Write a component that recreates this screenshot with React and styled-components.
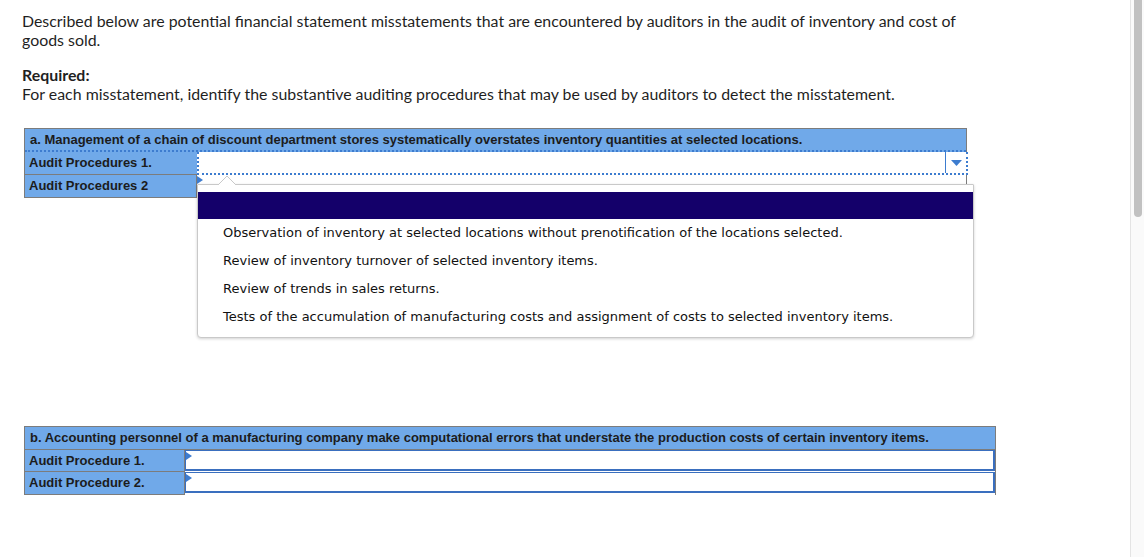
import React from "react";
import styled, { createGlobalStyle } from "styled-components";

const Global = createGlobalStyle`
  html, body { margin: 0; padding: 0; overflow: hidden; background: #fff; }
  #root { height: 557px; }
`;

const Page = styled.div`
  display: flex;
  height: 557px;
`;

const Main = styled.div`
  flex: 1;
  padding: 11px 0 0 22px;
  color: #1f1f1f;
`;

const ScrollTrack = styled.div`
  width: 12px;
  border-left: 1px solid #e4e4e4;
  background: #fafafa;
  display: flex;
  justify-content: center;
  padding-left: 1px;
`;

const ScrollThumb = styled.div`
  width: 8px;
  height: 217px;
  background: #c1c1c1;
  border-radius: 0 0 4px 4px;
`;

const Intro = styled.p`
  margin: 0;
  width: 975px;
  font-family: Lato, "Open Sans", sans-serif;
  font-size: 15.9px;
  line-height: 19px;
`;

const Required = styled.div`
  margin-top: 16px;
  font-family: Lato, "Open Sans", sans-serif;
  font-size: 15.9px;
  line-height: 19px;
  strong { font-weight: 700; }
`;

const Table = styled.div`
  position: relative;
  width: ${(p) => p.$width}px;
  margin: ${(p) => p.$mt}px 0 0 2px;
  border: 1px solid #7c7c7c;
  border-bottom: none;
  display: grid;
  grid-template-columns: ${(p) => p.$left}px 1fr;
  font-family: "Liberation Sans", Arial, sans-serif;
  font-size: 13px;
  font-weight: 700;
  color: #1c1c1c;
`;

const Header = styled.div`
  grid-column: 1 / -1;
  background: #70a9e9;
  line-height: 22px;
  padding-left: 5px;
  border-bottom: ${(p) => (p.$focus ? "2px dotted #3d7ccf" : "1px solid #7c7c7c")};
  height: ${(p) => (p.$focus ? 21 : 22)}px;
`;

const Label = styled.div`
  background: #70a9e9;
  height: ${(p) => p.$h || 22}px;
  line-height: ${(p) => p.$h || 22}px;
  padding-left: 4px;
  border-bottom: 1px solid #7c7c7c;
  border-right: ${(p) => (p.$noRight ? "none" : "1px solid #7c7c7c")};
`;

const SelectCell = styled.div`
  display: flex;
  background: #fff;
  height: 21px;
  border: 2px dotted #3d7ccf;
  border-top: none;
  margin-right: -2px;
`;

const SelectValue = styled.div`
  flex: 1;
`;

const ArrowBox = styled.div`
  width: 20px;
  border-left: 1px solid #3d7ccf;
  display: flex;
  align-items: center;
  justify-content: center;
`;

const PlainCell = styled.div`
  position: relative;
  background: #fff;
  border-bottom: 1px solid #7c7c7c;
`;

const InputCell = styled.div`
  position: relative;
  background: #fff;
  border: 2px solid #3a6fbf;
  border-top-width: 1px;
  border-left-width: 1px;
  height: 18px;
  margin-bottom: 1px;
`;

const Marker = styled.svg`
  position: absolute;
  left: 0;
  top: 1px;
`;

const Popup = styled.div`
  position: absolute;
  left: 172px;
  top: 55px;
  width: 777px;
  height: 154px;
  box-sizing: border-box;
  background: #fff;
  border: 1px solid #c9c9c9;
  border-radius: 1px 1px 4px 4px;
  box-shadow: 0 1px 3px rgba(0, 0, 0, 0.18);
  padding-top: 7px;
  font-family: "DejaVu Sans", Verdana, sans-serif;
  font-weight: 400;
  font-size: 13px;
  color: #111;
`;

const Caret = styled.svg`
  position: absolute;
  left: 20px;
  top: -10px;
`;

const NavyBar = styled.div`
  height: 27px;
  background: #14006a;
`;

const Options = styled.ul`
  list-style: none;
  margin: 0;
  padding: 0 0 0 25px;
`;

const Option = styled.li`
  height: 28px;
  line-height: 28px;
`;

const options = [
  "Observation of inventory at selected locations without prenotification of the locations selected.",
  "Review of inventory turnover of selected inventory items.",
  "Review of trends in sales returns.",
  "Tests of the accumulation of manufacturing costs and assignment of costs to selected inventory items.",
];

const Tri = () => (
  <Marker width="6" height="8" viewBox="0 0 6 8">
    <path d="M0 0 L6 4 L0 8 Z" fill="#3d7ccf" />
  </Marker>
);

export default function App() {
  return (
    <Page>
      <Global />
      <Main>
        <Intro>
          Described below are potential financial statement misstatements that are encountered by auditors in the
          audit of inventory and cost of goods sold.
        </Intro>
        <Required>
          <strong>Required:</strong>
          <div>For each misstatement, identify the substantive auditing procedures that may be used by auditors to detect the misstatement.</div>
        </Required>

        <Table $width={941} $left={172} $mt={25}>
          <Header $focus>a. Management of a chain of discount department stores systematically overstates inventory quantities at selected locations.</Header>
          <Label $noRight>Audit Procedures 1.</Label>
          <SelectCell>
            <SelectValue />
            <ArrowBox>
              <svg width="11" height="6" viewBox="0 0 11 6">
                <path d="M0 0 H11 L5.5 6 Z" fill="#3d7ccf" />
              </svg>
            </ArrowBox>
          </SelectCell>
          <Label>Audit Procedures 2</Label>
          <PlainCell>
            <Tri />
          </PlainCell>
          <Popup>
            <Caret width="18" height="10" viewBox="0 0 18 10">
              <path d="M0 10 L9 1 L18 10" fill="#fff" stroke="#c9c9c9" strokeWidth="1" />
            </Caret>
            <NavyBar />
            <Options>
              {options.map((o) => (
                <Option key={o}>{o}</Option>
              ))}
            </Options>
          </Popup>
        </Table>

        <Table $width={970} $left={160} $mt={228}>
          <Header>b. Accounting personnel of a manufacturing company make computational errors that understate the production costs of certain inventory items.</Header>
          <Label $h={21}>Audit Procedure 1.</Label>
          <InputCell>
            <Tri />
          </InputCell>
          <Label $h={22}>Audit Procedure 2.</Label>
          <InputCell>
            <Tri />
          </InputCell>
        </Table>
      </Main>
      <ScrollTrack>
        <ScrollThumb />
      </ScrollTrack>
    </Page>
  );
}
